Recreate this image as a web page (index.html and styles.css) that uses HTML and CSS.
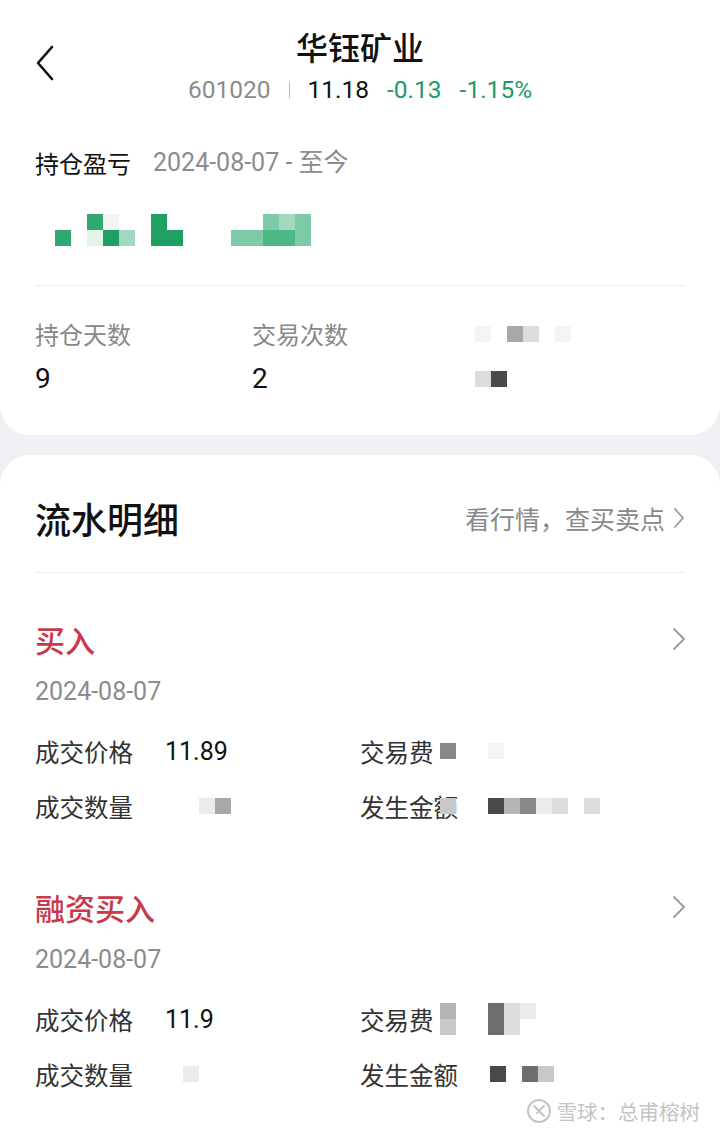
FILE: index.html
```html
<!DOCTYPE html>
<html lang="zh-CN">
<head>
    <meta charset="UTF-8">
    <meta name="viewport" content="width=device-width, initial-scale=1.0">
    <title>华钰矿业 - 持仓明细</title>
    <link rel="stylesheet" href="styles.css">
</head>
<body>
    <div class="top">
        <div class="nav">
            <svg class="back" width="20" height="36" viewBox="0 0 20 36">
                <path d="M17 2 L3 18 L17 34" fill="none" stroke="#111" stroke-width="2.6" stroke-linecap="round" stroke-linejoin="round"/>
            </svg>
            <div class="nav-center">
                <div class="title">华钰矿业</div>
                <div class="quote">
                    <span class="code">601020</span>
                    <span class="sep"></span>
                    <span class="price">11.18</span>
                    <span class="down">-0.13</span>
                    <span class="down">-1.15%</span>
                </div>
            </div>
            <div></div>
        </div>

        <div class="pnl-head">
            <span class="pnl-title">持仓盈亏</span>
            <span class="pnl-range">2024-08-07 - 至今</span>
        </div>
        <div class="mosaic pnl-value">
            <i></i><i class="g2"></i>
            <i></i><i></i>
            <i class="g2"></i><i class="g6"></i>
            <i class="w1"></i><i class="g1"></i>
            <i></i><i class="g5"></i>
            <i></i><i></i>
            <i class="g1"></i><i class="g1"></i>
            <i></i><i class="g1"></i>
            <i></i><i></i>
            <i></i><i></i>
            <i></i><i></i>
            <i></i><i class="g4"></i>
            <i></i><i class="g4"></i>
            <i class="g4"></i><i class="g3"></i>
            <i class="g5"></i><i class="g3"></i>
            <i class="g4"></i><i class="g4"></i>
        </div>

        <div class="line"></div>

        <div class="stats">
            <div class="stat">
                <div class="stat-label">持仓天数</div>
                <div class="stat-value">9</div>
            </div>
            <div class="stat">
                <div class="stat-label">交易次数</div>
                <div class="stat-value">2</div>
            </div>
            <div class="stat">
                <div class="stat-label">
                    <div class="mosaic single">
                        <i class="w1"></i><i></i><i class="k5"></i><i class="k8"></i><i></i><i class="w1"></i>
                    </div>
                </div>
                <div class="stat-value">
                    <div class="mosaic single">
                        <i class="k8"></i><i class="k2"></i>
                    </div>
                </div>
            </div>
        </div>
    </div>

    <div class="flow">
        <div class="flow-head">
            <div class="flow-title">流水明细</div>
            <div class="flow-link">
                看行情，查买卖点
                <svg width="12" height="22" viewBox="0 0 12 22">
                    <path d="M2 2 L10 11 L2 20" fill="none" stroke="#999" stroke-width="1.8" stroke-linecap="round" stroke-linejoin="round"/>
                </svg>
            </div>
        </div>
        <div class="line"></div>

        <div class="trade">
            <div class="trade-head">
                <span class="trade-type">买入</span>
                <svg width="14" height="24" viewBox="0 0 14 24">
                    <path d="M2 2 L12 12 L2 22" fill="none" stroke="#999" stroke-width="1.8" stroke-linecap="round" stroke-linejoin="round"/>
                </svg>
            </div>
            <div class="trade-date">2024-08-07</div>
            <div class="fields">
                <div class="field">
                    <span class="field-label">成交价格</span>
                    <span class="field-value">11.89</span>
                </div>
                <div class="field">
                    <span class="field-label">交易费</span>
                    <div class="mosaic single cover">
                        <i class="k4"></i><i></i><i></i><i class="w1"></i>
                    </div>
                </div>
                <div class="field">
                    <span class="field-label">成交数量</span>
                    <div class="mosaic single shift">
                        <i class="w2"></i><i class="k5"></i>
                    </div>
                </div>
                <div class="field">
                    <span class="field-label">发生金额</span>
                    <div class="mosaic single cover">
                        <i class="k7"></i><i></i><i></i><i class="k2"></i><i class="k6"></i><i class="k4"></i><i class="w2"></i><i class="k8"></i><i></i><i class="k8"></i>
                    </div>
                </div>
            </div>
        </div>

        <div class="trade">
            <div class="trade-head">
                <span class="trade-type">融资买入</span>
                <svg width="14" height="24" viewBox="0 0 14 24">
                    <path d="M2 2 L12 12 L2 22" fill="none" stroke="#999" stroke-width="1.8" stroke-linecap="round" stroke-linejoin="round"/>
                </svg>
            </div>
            <div class="trade-date">2024-08-07</div>
            <div class="fields">
                <div class="field">
                    <span class="field-label">成交价格</span>
                    <span class="field-value">11.9</span>
                </div>
                <div class="field">
                    <span class="field-label">交易费</span>
                    <div class="mosaic double cover">
                        <i class="k6"></i><i class="k7"></i>
                        <i></i><i></i>
                        <i></i><i></i>
                        <i class="k3"></i><i class="k3"></i>
                        <i class="k8"></i><i class="k8"></i>
                        <i class="w2"></i><i></i>
                    </div>
                </div>
                <div class="field">
                    <span class="field-label">成交数量</span>
                    <div class="mosaic single shift-sm">
                        <i class="w2"></i>
                    </div>
                </div>
                <div class="field">
                    <span class="field-label">发生金额</span>
                    <div class="mosaic single">
                        <i class="k2"></i><i></i><i class="k3"></i><i class="k7"></i>
                    </div>
                </div>
            </div>
        </div>

        <div class="watermark">
            <svg width="26" height="26" viewBox="0 0 26 26">
                <circle cx="13" cy="13" r="11" fill="none" stroke="#c4c4c4" stroke-width="2"/>
                <path d="M8 8 L18 18 M18 8 L11 15" fill="none" stroke="#c4c4c4" stroke-width="2" stroke-linecap="round"/>
            </svg>
            <span>雪球：总甫榕树</span>
        </div>
    </div>
</body>
</html>
```

FILE: styles.css
```css
* {
    box-sizing: border-box;
}
body {
    margin: 0;
    width: 720px;
    min-height: 1136px;
    background-color: #f1f1f5;
    font-family: "Noto Sans CJK SC", sans-serif;
    color: #111;
}
.top {
    background-color: #fff;
    border-radius: 0 0 30px 30px;
    padding: 26px 35px 0;
    height: 435px;
}
.nav {
    display: grid;
    grid-template-columns: 40px 1fr 40px;
    align-items: center;
}
.back {
    margin-top: -6px;
}
.nav-center {
    text-align: center;
}
.title {
    font-size: 32px;
    font-weight: 500;
    line-height: 40px;
}
.quote {
    margin-top: 9px;
    display: flex;
    justify-content: center;
    align-items: center;
    gap: 18px;
    font-family: Roboto, "Noto Sans CJK SC", sans-serif;
    font-size: 24.5px;
    line-height: 30px;
}
.code {
    color: #8c8c8c;
}
.sep {
    width: 1px;
    height: 16px;
    background-color: #bbb;
}
.price {
    color: #111;
}
.down {
    color: #1b9a6b;
}
.pnl-head {
    margin-top: 42px;
    display: flex;
    align-items: center;
    gap: 22px;
    line-height: 32px;
}
.pnl-title {
    font-size: 24px;
}
.pnl-range {
    font-family: Roboto, "Noto Sans CJK SC", sans-serif;
    font-size: 25px;
    color: #8c8c8c;
}
.mosaic {
    display: grid;
    grid-auto-flow: column;
    grid-auto-columns: 16px;
}
.mosaic i {
    display: block;
    width: 16px;
    height: 16px;
}
.pnl-value {
    margin-top: 35px;
    margin-left: 20px;
    grid-template-rows: 16px 16px;
}
.single {
    grid-template-rows: 16px;
}
.double {
    grid-template-rows: 16px 16px;
}
.g1 { background-color: #1f9f64; }
.g2 { background-color: #2fa874; }
.g3 { background-color: #4cb886; }
.g4 { background-color: #7dcaa8; }
.g5 { background-color: #a2d8bf; }
.g6 { background-color: #e3f3ea; }
.w1 { background-color: #f4f4f4; }
.w2 { background-color: #ebebeb; }
.k2 { background-color: #4a4a4a; }
.k3 { background-color: #6e6e6e; }
.k4 { background-color: #888; }
.k5 { background-color: #a8a8a8; }
.k6 { background-color: #b4b4b4; }
.k7 { background-color: #c8c8c8; }
.k8 { background-color: #dcdcdc; }
.line {
    height: 1px;
    background-color: #eee;
}
.top .line {
    margin-top: 39px;
}
.stats {
    margin-top: 32px;
    display: grid;
    grid-template-columns: 217px 223px 1fr;
}
.stat-label {
    font-size: 24px;
    line-height: 32px;
    color: #888;
    height: 32px;
    display: flex;
    align-items: center;
}
.stat-value {
    margin-top: 12px;
    font-family: Roboto, "Noto Sans CJK SC", sans-serif;
    font-size: 28px;
    line-height: 34px;
    height: 34px;
    display: flex;
    align-items: center;
}
.flow {
    margin-top: 20px;
    background-color: #fff;
    border-radius: 30px 30px 0 0;
    padding: 40px 35px 0;
    min-height: 681px;
    position: relative;
}
.flow-head {
    display: flex;
    justify-content: space-between;
    align-items: center;
    height: 46px;
}
.flow-title {
    font-size: 36px;
    font-weight: 500;
}
.flow-link {
    display: flex;
    align-items: center;
    gap: 8px;
    font-size: 25px;
    color: #888;
}
.flow .line {
    margin-top: 31px;
}
.trade {
    padding-top: 48px;
    padding-bottom: 19px;
}
.trade-head {
    display: flex;
    justify-content: space-between;
    align-items: center;
    height: 36px;
}
.trade-head svg {
    margin-right: -1px;
}
.trade-type {
    font-size: 30px;
    font-weight: 500;
    color: #c83a4a;
}
.trade-date {
    margin-top: 20px;
    font-family: Roboto, "Noto Sans CJK SC", sans-serif;
    font-size: 25px;
    line-height: 30px;
    color: #8c8c8c;
}
.fields {
    margin-top: 28px;
    display: grid;
    grid-template-columns: 325px 1fr;
    row-gap: 23px;
}
.field {
    display: flex;
    align-items: center;
    height: 32px;
}
.field-label {
    width: 130px;
    font-size: 24.5px;
    color: #333;
}
.field-value {
    font-family: Roboto, "Noto Sans CJK SC", sans-serif;
    font-size: 25px;
}
.cover {
    margin-left: -50px;
}
.shift {
    margin-left: 34px;
}
.shift-sm {
    margin-left: 18px;
}
.watermark {
    position: absolute;
    right: 20px;
    bottom: 12px;
    display: flex;
    align-items: center;
    gap: 5px;
    font-size: 20.5px;
    line-height: 26px;
    color: #c4c4c4;
}
```
